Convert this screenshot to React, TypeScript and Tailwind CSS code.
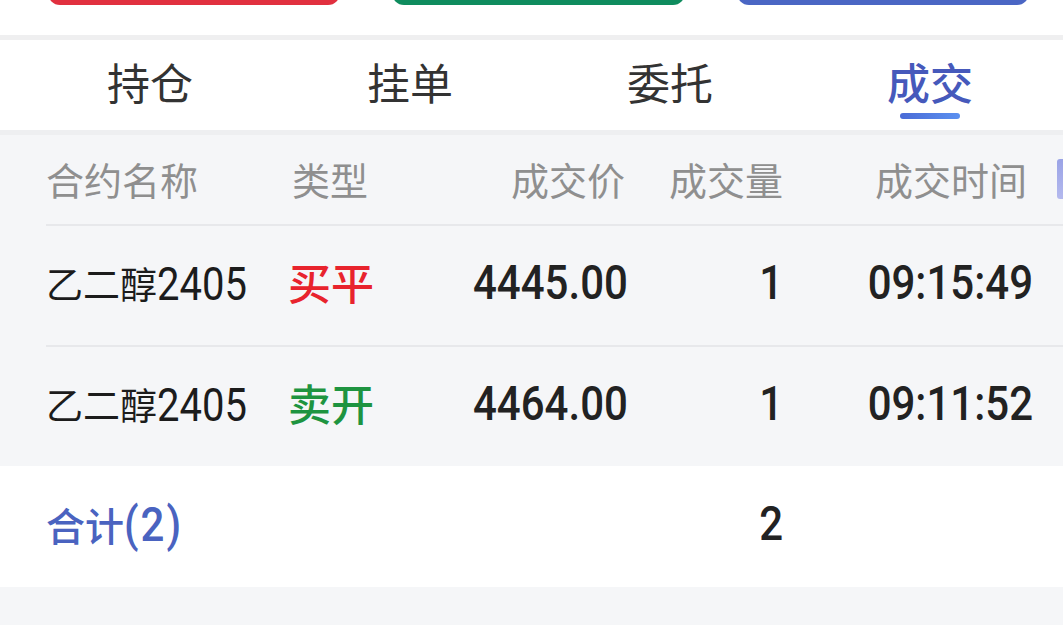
import React from "react";

const font = { fontFamily: "Roboto, 'Noto Sans CJK SC', sans-serif" };

const cols = "grid grid-cols-[242px_185px_152px_158px_250px_1fr] items-center";

function Num({ children, className = "" }: { children: React.ReactNode; className?: string }) {
  return <span className={`inline-block scale-y-[1.16] ${className}`}>{children}</span>;
}

function Row({ name, code, type, typeColor, price, qty, time }: { name: string; code: string; type: string; typeColor: string; price: string; qty: string; time: string }) {
  return (
    <div className="pl-[46px]">
      <div className={`${cols} h-[121px] border-b-2 border-[#e7e8eb]`}>
        <div className="text-[37px] text-[#1c1c1c] leading-none">
          {name}
          <Num className="text-[40px] -translate-y-[1px]">{code}</Num>
        </div>
        <div className={`text-[43px] font-medium leading-none ${typeColor}`}>{type}</div>
        <div className="text-right text-[42px] font-medium text-[#222222] leading-none">
          <Num className="-translate-y-[3px] pr-[1px]">{price}</Num>
        </div>
        <div className="text-right text-[42px] font-medium text-[#222222] leading-none">
          <Num className="-translate-y-[3px]">{qty}</Num>
        </div>
        <div className="text-right text-[42px] font-medium text-[#222222] leading-none">
          <Num className="-translate-y-[3px]">{time}</Num>
        </div>
        <div />
      </div>
    </div>
  );
}

export default function App() {
  return (
    <div className="w-[1063px] h-[625px] bg-[#f5f6f8] overflow-hidden" style={font}>
      {/* top buttons */}
      <div className="h-[35px] bg-white overflow-hidden pl-[48px] flex gap-[52px]">
        <div className="shrink-0 w-[292px] h-[44px] -mt-[39px] rounded-[12px] bg-[#e1303f]" />
        <div className="shrink-0 w-[293px] h-[44px] -mt-[39px] rounded-[12px] bg-[#0f8c5e]" />
        <div className="shrink-0 w-[292px] h-[44px] -mt-[39px] rounded-[12px] bg-[#4a66c4]" />
      </div>
      <div className="h-[5px] bg-[#efeff0]" />
      {/* tabs */}
      <div className="h-[90px] bg-white grid grid-cols-4 pl-[20px] pr-[3px]">
        {["持仓", "挂单", "委托", "成交"].map((t, i) => (
          <div key={t} className="relative flex items-center justify-center">
            <span className={`text-[43px] leading-none ${i === 3 ? "text-[#4659bb] font-medium" : "text-[#333333]"}`}>{t}</span>
            {i === 3 && (
              <div className="absolute left-1/2 -translate-x-1/2 top-[73px] w-[60px] h-[6px] rounded-full bg-gradient-to-r from-[#4a6bd6] to-[#5b90f0]" />
            )}
          </div>
        ))}
      </div>
      <div className="h-[5px] bg-[#eeeff1]" />
      {/* header */}
      <div className="pl-[46px]">
        <div className={`${cols} h-[91px] border-b-2 border-[#e7e8eb] text-[38px] text-[#8f8f8f] leading-none`}>
          <div className="pt-[4px]">合约名称</div>
          <div className="pl-[4px] pt-[4px]">类型</div>
          <div className="text-right pt-[4px]">成交价</div>
          <div className="text-right pt-[4px]">成交量</div>
          <div className="text-right pr-[6px] pt-[4px]">成交时间</div>
          <div className="justify-self-end w-[6px] h-[40px] -mt-[2px] rounded-l-[3px] bg-gradient-to-b from-[#9aa3e6] to-[#b4b9ee]" />
        </div>
      </div>
      <Row name="乙二醇" code="2405" type="买平" typeColor="text-[#e8232d]" price="4445.00" qty="1" time="09:15:49" />
      <Row name="乙二醇" code="2405" type="卖开" typeColor="text-[#1e9440]" price="4464.00" qty="1" time="09:11:52" />
      {/* total */}
      <div className="h-[121px] bg-white pl-[46px] -mt-[2px]">
        <div className={`${cols} h-full`}>
          <div className="text-[39px] font-medium text-[#4a63c0] leading-none">
            合计<Num className="text-[42px] tracking-[2px] -translate-y-[2px]">(2)</Num>
          </div>
          <div />
          <div />
          <div className="text-right text-[42px] font-medium text-[#222222] leading-none">
            <Num className="-translate-y-[3px]">2</Num>
          </div>
          <div />
          <div />
        </div>
      </div>
    </div>
  );
}
